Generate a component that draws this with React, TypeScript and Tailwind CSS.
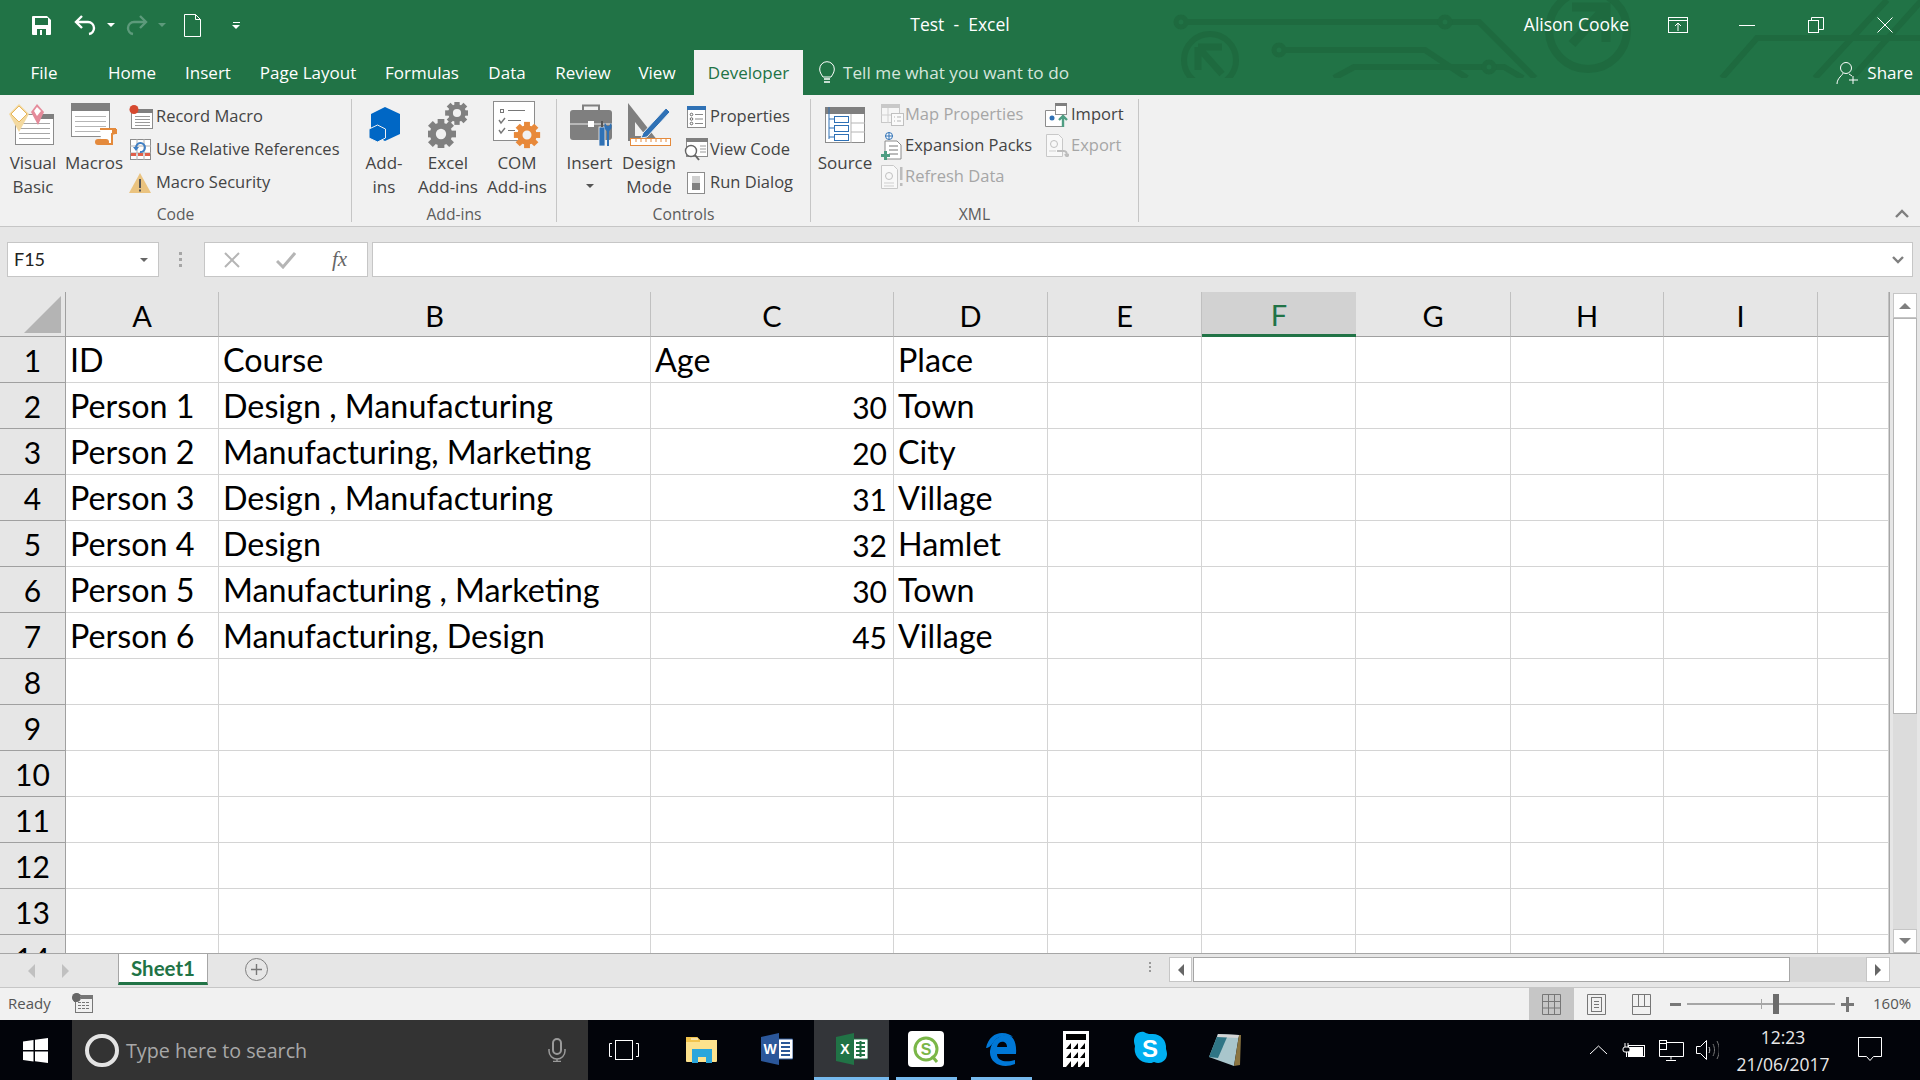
import type { ReactNode } from "react";

const GREY = "#7f7f7f";

function Svg({ w, h, children, className }: { w: number; h: number; children: ReactNode; className?: string }) {
  return (
    <svg width={w} height={h} viewBox={`0 0 ${w} ${h}`} fill="none" className={`block shrink-0 ${className ?? ""}`}>
      {children}
    </svg>
  );
}

function Gear({ cx, cy, r, fill }: { cx: number; cy: number; r: number; fill: string }) {
  const teeth = [0, 45, 90, 135, 180, 225, 270, 315];
  return (
    <g>
      {teeth.map((a) => (
        <rect key={a} x={cx - r * 0.28} y={cy - r * 1.25} width={r * 0.56} height={r * 0.6} fill={fill} transform={`rotate(${a} ${cx} ${cy})`} />
      ))}
      <circle cx={cx} cy={cy} r={r * 0.68} stroke={fill} strokeWidth={r * 0.5} fill="#f1f1f1" />
    </g>
  );
}

function Lines({ x1, x2, ys, color = "#a6a6a6" }: { x1: number; x2: number; ys: number[]; color?: string }) {
  return (
    <>
      {ys.map((y) => (
        <path key={y} d={`M${x1} ${y + 0.5}H${x2}`} stroke={color} />
      ))}
    </>
  );
}

const icons = {
  visualBasic: (
    <Svg w={46} h={43}>
      <rect x="6.5" y="11.5" width="38" height="30" fill="#fff" stroke="#8c8c8c" />
      <rect x="30" y="11" width="15" height="5" fill="#7f7f7f" />
      <Lines x1={10} x2={41} ys={[20, 25, 30, 35]} />
      <path d="M10 1 20 11 10 29 0 11Z" fill="#f3d9a0" />
      <path d="M10 3 18 11 10 19 2 11Z" fill="#fff" stroke="#e6b65c" />
      <path d="M28 1 35 9 29 22 22 9Z" fill="#e58b9b" />
      <path d="M28 4 32 8 28 13 25 8Z" fill="#fff" />
    </Svg>
  ),
  macros: (
    <Svg w={47} h={43}>
      <rect x="0.5" y="0.5" width="38" height="33" fill="#fff" stroke="#8c8c8c" />
      <rect x="0" y="0" width="39" height="8" fill="#7f7f7f" />
      <Lines x1={4} x2={35} ys={[13, 18, 23, 28]} color="#b5b5b5" />
      <path d="M29 26h15v4l-3 1v10H30V36" fill="#fff" stroke="#e48a3c" strokeWidth="2" />
      <rect x="24" y="36" width="14" height="6" rx="3" fill="#e48a3c" />
      <path d="M41 26h5v5h-5Z" fill="#e48a3c" />
    </Svg>
  ),
  record: (
    <Svg w={24} h={24}>
      <rect x="2.5" y="4.5" width="21" height="19" fill="#fff" stroke="#8c8c8c" />
      <rect x="8" y="4" width="16" height="4" fill="#7f7f7f" />
      <Lines x1={6} x2={21} ys={[11, 14, 17, 20]} color="#9a9a9a" />
      <circle cx="5" cy="4.5" r="4.5" fill="#d6492f" />
    </Svg>
  ),
  relative: (
    <Svg w={21} h={21}>
      <rect x="0.5" y="0.5" width="20" height="20" fill="#fff" stroke="#8c8c8c" />
      <path d="M7 0v21M14 0v21M0 7h21M0 14h21" stroke="#b0b0b0" />
      <rect x="1" y="14" width="5" height="3" fill="#e0604a" />
      <rect x="8" y="14" width="5" height="3" fill="#e0604a" />
      <rect x="15" y="14" width="5" height="3" fill="#e0604a" />
      <path d="M6 9a4.5 4.5 0 1 1 4 4" stroke="#3f7fc4" strokeWidth="2" />
      <path d="M3 8h6l-3 4Z" fill="#3f7fc4" />
    </Svg>
  ),
  warning: (
    <Svg w={24} h={22}>
      <path d="M12 1 23 21H1Z" fill="#eac37f" />
      <path d="M11 7h2v9h-2ZM11 17.5h2v2h-2Z" fill="#555" />
    </Svg>
  ),
  addins: (
    <Svg w={33} h={36}>
      <path d="M17 0 32 7v20L17 34 3 27V7Z" fill="#0067c5" />
      <path d="M9.500 18 17.500 22V31L9.500 35 1 31V22Z" fill="#0067c5" stroke="#f1f1f1" strokeWidth="1" />
    </Svg>
  ),
  excelAddins: (
    <Svg w={40} h={46}>
      <Gear cx={29} cy={11} r={9.5} fill="#808080" />
      <Gear cx={13} cy={32} r={12} fill="#808080" />
    </Svg>
  ),
  comAddins: (
    <Svg w={48} h={48}>
      <rect x="0.5" y="0.5" width="41" height="39" fill="#fff" stroke="#8c8c8c" />
      <rect x="7.5" y="8.5" width="3" height="3" stroke="#777" />
      <path d="M15 9.5H32M15 19.5H28M15 29.5H22" stroke="#777" />
      <path d="M6 19l2 3 4-5M6 29l2 3 4-5" stroke="#777" strokeWidth="1.4" />
      <Gear cx={34} cy={34} r={10.5} fill="#e8893a" />
    </Svg>
  ),
  insert: (
    <Svg w={46} h={43} className="ml-[6px]">
      <rect x="0" y="7" width="42" height="30" rx="3" fill="#7f7f7f" />
      <path d="M13 7V2.5h16V7" stroke="#7f7f7f" strokeWidth="2" />
      <path d="M0 21h42" stroke="#f1f1f1" />
      <rect x="18" y="18" width="6" height="6" fill="#fff" />
      <rect x="29" y="24" width="6" height="19" fill="#2f71b5" stroke="#f1f1f1" strokeWidth="0.8" />
      <path d="M31 18h2v6h-2Z" fill="#555" />
      <path d="M37 43V28c-3-2-3-6-2-8l2 3h2l2-3c1 3 1 6-2 8v15Z" fill="#2f71b5" />
    </Svg>
  ),
  design: (
    <Svg w={46} h={43}>
      <path d="M2 0 32 38H2Z" fill="#7f7f7f" />
      <path d="M9 19 20 33H9Z" fill="#f1f1f1" />
      <path d="M17 30 40 5l4 4-23 25-6 1Z" fill="#2f71b5" stroke="#f1f1f1" />
      <rect x="4.5" y="35.5" width="40" height="7" fill="#fff" stroke="#e48a3c" />
      <path d="M10 36v3M15 36v3M20 36v3M25 36v3M30 36v3M35 36v3M40 36v3" stroke="#e48a3c" />
    </Svg>
  ),
  properties: (
    <Svg w={19} h={22}>
      <rect x="0.5" y="0.5" width="18" height="21" fill="#fff" stroke="#8c8c8c" />
      <rect x="0" y="0" width="19" height="4" fill="#2f71b5" />
      <circle cx="4.5" cy="8.5" r="1.3" stroke="#666" />
      <circle cx="4.5" cy="13" r="1.3" stroke="#666" />
      <circle cx="4.5" cy="17.5" r="1.3" stroke="#666" />
      <path d="M8 8.5h8M8 13h8M8 17.5h8" stroke="#888" />
    </Svg>
  ),
  viewCode: (
    <Svg w={24} h={23}>
      <rect x="2.5" y="0.5" width="21" height="18" fill="#fff" stroke="#8c8c8c" />
      <rect x="2" y="0" width="22" height="4" fill="#7f7f7f" />
      <path d="M16 8h6M16 11h6M16 14h6" stroke="#999" />
      <circle cx="7" cy="13" r="5.5" fill="#fff" stroke="#666" strokeWidth="1.4" />
      <path d="M11 17l4 5" stroke="#666" strokeWidth="2" />
    </Svg>
  ),
  runDialog: (
    <Svg w={19} h={22}>
      <rect x="0.5" y="0.5" width="17" height="21" fill="#fff" stroke="#8c8c8c" />
      <rect x="5" y="4" width="8" height="14" fill="#d0d0d0" />
      <rect x="5" y="11" width="8" height="7" fill="#808080" />
    </Svg>
  ),
  source: (
    <Svg w={40} h={36}>
      <rect x="0.5" y="0.5" width="39" height="35" fill="#fff" stroke="#8c8c8c" />
      <rect x="0" y="0" width="40" height="7" fill="#7f7f7f" />
      <path d="M26 16h14M26 25h14M26 7v29" stroke="#b5b5b5" />
      <path d="M4 0v32M4 12h5M4 21h5M4 30h5" stroke="#2f71b5" />
      <rect x="9.5" y="9.5" width="14" height="6" fill="#fff" stroke="#2f71b5" />
      <rect x="9.5" y="18.5" width="14" height="6" fill="#fff" stroke="#2f71b5" />
      <rect x="9.5" y="27.5" width="14" height="6" fill="#fff" stroke="#2f71b5" />
    </Svg>
  ),
  mapProperties: (
    <Svg w={23} h={22}>
      <rect x="0.5" y="0.5" width="18" height="18" fill="#f6f6f6" stroke="#c8c8c8" />
      <rect x="0" y="0" width="19" height="4" fill="#c8c8c8" />
      <path d="M7 4v15M0 11h19" stroke="#d0d0d0" />
      <rect x="10.5" y="9.5" width="12" height="12" fill="#fafafa" stroke="#c0c0c0" />
      <path d="M13 13h1M16 13h4M13 17h1M16 17h4" stroke="#b5b5b5" />
    </Svg>
  ),
  expansion: (
    <Svg w={23} h={28}>
      <circle cx="8" cy="4" r="3.5" fill="#fff" stroke="#2f71b5" />
      <path d="M4.5 4h7M8 .5v7" stroke="#2f71b5" />
      <path d="M4 9h12l4 4v14H4Z" fill="#fff" stroke="#8c8c8c" />
      <path d="M8 14h9M8 18h9M8 22h9" stroke="#777" />
      <path d="M3 19h3v3h3v3H6v3H3v-3H0v-3h3Z" fill="#4f9e83" />
    </Svg>
  ),
  refresh: (
    <Svg w={22} h={24}>
      <path d="M.5.5h12l4 4v19H.5Z" fill="#f8f8f8" stroke="#c8c8c8" />
      <circle cx="8" cy="11" r="3.5" stroke="#c0c0c0" />
      <path d="M3 18h10M3 21h10" stroke="#cfcfcf" />
      <path d="M19 2h2.5v13H19ZM19 18h2.5v3H19Z" fill="#bdbdbd" />
    </Svg>
  ),
  importXml: (
    <Svg w={25} h={24}>
      <path d="M.5 7.5h13l4 4v12H.5Z" fill="#fff" stroke="#8c8c8c" />
      <rect x="10.5" y="0.5" width="11" height="11" fill="#fff" stroke="#8c8c8c" />
      <rect x="10" y="0" width="12" height="3" fill="#7f7f7f" />
      <circle cx="7" cy="15" r="2.5" fill="#2f71b5" />
      <path d="M18 24v-10M14 17l4-4 4 4" stroke="#4f9e83" strokeWidth="2.4" />
    </Svg>
  ),
  exportXml: (
    <Svg w={23} h={23}>
      <path d="M.5.5h12l4 4v18H.5Z" fill="#f8f8f8" stroke="#c8c8c8" />
      <circle cx="8" cy="10" r="3.5" stroke="#c0c0c0" />
      <path d="M3 17h7" stroke="#cfcfcf" />
      <path d="M11 17h7c3 0 3 3 3 5M19 20l2 3 2-3" stroke="#bdbdbd" strokeWidth="2" />
    </Svg>
  ),
};

function Large({ w, icon, lines, caret }: { w: string; icon: ReactNode; lines: string[]; caret?: boolean }) {
  return (
    <div className={`${w} flex flex-col items-center text-[17px]`}>
      <div className="-mt-[1px] flex h-[53px] items-center justify-center">{icon}</div>
      {lines.map((line) => (
        <div key={line} className="h-[24px] whitespace-nowrap leading-[24px]">
          {line}
        </div>
      ))}
      {caret && <div className="mt-[9px] h-0 w-0 border-x-[4px] border-t-[4px] border-x-transparent border-t-[#555]" />}
    </div>
  );
}

function Small({ box, h, icon, label, disabled }: { box: string; h: string; icon: ReactNode; label: string; disabled?: boolean }) {
  return (
    <div className={`flex items-center whitespace-nowrap ${h} ${disabled ? "text-[#a6a6a6]" : ""}`}>
      <div className={`${box} flex items-center justify-center`}>{icon}</div>
      <span>{label}</span>
    </div>
  );
}

function Group({ w, label, children }: { w: string; label: string; children: ReactNode }) {
  return (
    <div className={`${w} flex flex-col pt-[4px]`}>
      <div className="flex h-[106px]">{children}</div>
      <div className="flex h-[20px] items-center justify-center text-[15.7px] text-[#5c5c5c]">{label}</div>
    </div>
  );
}

function Separator() {
  return <div className="mt-[4px] h-[123px] w-px bg-[#c6c6c6]" />;
}

function Circuit() {
  return (
    <svg className="absolute left-0 top-0" width="1920" height="78" viewBox="0 0 1920 78" fill="none" stroke="#1e6a3f" strokeWidth="6">
      <circle cx="1181" cy="22" r="5" strokeWidth="5" />
      <path d="M1186 22H1441M1450 22H1479L1535 78" />
      <circle cx="1445" cy="22" r="5" strokeWidth="5" />
      <circle cx="1279" cy="50" r="5" strokeWidth="5" />
      <path d="M1284 50H1425L1467 78" />
      <path d="M1334 78 1354 67H1484M1494 67H1504L1523 78" />
      <circle cx="1489" cy="67" r="5" strokeWidth="5" />
      <ellipse cx="1210" cy="60" rx="26" ry="26" strokeWidth="6" />
      <path d="M1198 47H1222M1198 47V70M1198 47 1222 74" strokeWidth="7" />
      <circle cx="1588" cy="30" r="39" strokeWidth="8" />
      <path d="M1572 7H1606V42M1606 7 1572 44" strokeWidth="9" />
      <path d="M1722 78 1757 38H1920M1815 78 1887 0M1852 78 1922 0" strokeWidth="6" />
    </svg>
  );
}

function TitleBar() {
  return (
    <div className="relative h-[50px] text-[15px] text-white">
      <Circuit />
      <div className="relative grid h-full grid-cols-[1fr_auto_1fr] items-center">
        <div className="flex items-center pl-[32px]">
          <Svg w={19} h={19}>
            <path d="M0 1a1 1 0 0 1 1-1h14l4 4v14a1 1 0 0 1-1 1H1a1 1 0 0 1-1-1Z" fill="#fff" />
            <rect x="3" y="2" width="13" height="7" fill="#217346" />
            <rect x="5" y="13" width="9" height="6" fill="#217346" />
            <rect x="8" y="14" width="2" height="5" fill="#fff" />
          </Svg>
          <Svg w={22} h={23} className="ml-[23px]">
            <path d="M8 2 2 8l6 6" stroke="#fff" strokeWidth="2.4" />
            <path d="M3 8h11a6 6 0 0 1 6 6 6 6 0 0 1-5 6" stroke="#fff" strokeWidth="2.4" />
          </Svg>
          <div className="ml-[11px] h-0 w-0 border-x-[4px] border-t-[4px] border-x-transparent border-t-white" />
          <Svg w={22} h={23} className="ml-[11px]">
            <path d="M14 2l6 6-6 6" stroke="#5d9a7b" strokeWidth="2.4" />
            <path d="M19 8H8a6 6 0 0 0-6 6 6 6 0 0 0 5 6" stroke="#5d9a7b" strokeWidth="2.4" />
          </Svg>
          <div className="ml-[10px] h-0 w-0 border-x-[4px] border-t-[4px] border-x-transparent border-t-[#5d9a7b]" />
          <Svg w={17} h={23} className="ml-[18px]">
            <path d="M.5.5h11l5 5v17H.5Z" stroke="#fff" />
            <path d="M11.5.5v5h5" stroke="#fff" />
          </Svg>
          <div className="ml-[31px] flex flex-col items-center gap-[2px]">
            <div className="h-px w-[7px] bg-white" />
            <div className="h-0 w-0 border-x-[4px] border-t-[4px] border-x-transparent border-t-white" />
          </div>
        </div>
        <div className="-mt-[2px] whitespace-pre text-[17.5px]">Test  -  Excel</div>
        <div className="flex items-center justify-end">
          <span className="-mt-[2px] text-[17.5px]">Alison Cooke</span>
          <Svg w={20} h={16} className="ml-[39px]">
            <rect x="0.5" y="0.5" width="19" height="15" stroke="#fff" />
            <path d="M0 3.5h20M10 14V6M7 9l3-3 3 3" stroke="#fff" />
          </Svg>
          <div className="ml-[51px] h-px w-[16px] bg-white" />
          <Svg w={16} h={16} className="ml-[53px]">
            <rect x="0.5" y="3.5" width="10" height="12" stroke="#fff" />
            <path d="M3.5 3V.5h12v12H11" stroke="#fff" />
          </Svg>
          <Svg w={16} h={16} className="ml-[53px] mr-[27px]">
            <path d="M.5.5l15 15M15.5.5l-15 15" stroke="#fff" />
          </Svg>
        </div>
      </div>
    </div>
  );
}

const tabs = [
  { label: "File", w: "w-[88px]" },
  { label: "Home", w: "w-[88px]" },
  { label: "Insert", w: "w-[64px]" },
  { label: "Page Layout", w: "w-[136px]" },
  { label: "Formulas", w: "w-[92px]" },
  { label: "Data", w: "w-[78px]" },
  { label: "Review", w: "w-[74px]" },
  { label: "View", w: "w-[74px]" },
];

function TabRow() {
  return (
    <div className="relative flex h-[45px] items-stretch text-[17px] text-white">
      {tabs.map((t) => (
        <div key={t.label} className={`${t.w} flex items-center justify-center`}>
          {t.label}
        </div>
      ))}
      <div className="flex w-[109px] items-center justify-center bg-[#f1f1f1] text-[#217346]">Developer</div>
      <div className="flex flex-1 items-center pl-[16px] text-[#d5e6dc]">
        <Svg w={16} h={23}>
          <path d="M4 16C2 13 .7 11 .7 8a7.3 7.3 0 0 1 14.6 0c0 3-1.3 5-3.3 8Z" stroke="#fff" />
          <path d="M5 18h6M5 21h6" stroke="#fff" strokeWidth="1.4" />
        </Svg>
        <span className="ml-[8px] mt-[1px] text-[17.2px]">Tell me what you want to do</span>
      </div>
      <div className="flex items-center pr-[7px]">
        <Svg w={23} h={24}>
          <circle cx="10" cy="7" r="5.5" stroke="#fff" />
          <path d="M7 12c0 2-6 5-6 11M13 13l3 2" stroke="#fff" />
          <path d="M17 15v8M13 19h9" stroke="#fff" />
        </Svg>
        <span className="ml-[8px] mt-[1px]">Share</span>
      </div>
    </div>
  );
}

function Ribbon() {
  return (
    <div className="relative flex h-[132px] border-b border-[#c6c6c6] bg-[#f1f1f1] text-[16.5px] text-[#444]">
      <Group w="w-[351px]" label="Code">
        <Large w="w-[66px]" icon={<div className="-ml-[2px]">{icons.visualBasic}</div>} lines={["Visual", "Basic"]} />
        <Large w="w-[56px]" icon={icons.macros} lines={["Macros"]} />
        <div className="ml-[3px] flex flex-col pt-[1px]">
          <Small box="w-[31px]" h="h-[33px]" icon={icons.record} label="Record Macro" />
          <Small box="w-[31px]" h="h-[33px]" icon={icons.relative} label="Use Relative References" />
          <Small box="w-[31px]" h="h-[33px]" icon={<div className="-ml-[2px]">{icons.warning}</div>} label="Macro Security" />
        </div>
      </Group>
      <Separator />
      <Group w="w-[204px]" label="Add-ins">
        <Large w="w-[64px]" icon={icons.addins} lines={["Add-", "ins"]} />
        <Large w="w-[64px]" icon={icons.excelAddins} lines={["Excel", "Add-ins"]} />
        <Large w="w-[74px]" icon={icons.comAddins} lines={["COM", "Add-ins"]} />
      </Group>
      <Separator />
      <Group w="w-[253px]" label="Controls">
        <Large w="w-[65px]" icon={icons.insert} lines={["Insert"]} caret />
        <Large w="w-[54px]" icon={icons.design} lines={["Design", "Mode"]} />
        <div className="flex flex-col pt-[1px]">
          <Small box="w-[34px] pl-[6px]" h="h-[33px]" icon={icons.properties} label="Properties" />
          <Small box="w-[34px] pl-[6px]" h="h-[33px]" icon={icons.viewCode} label="View Code" />
          <Small box="w-[34px] pl-[6px]" h="h-[33px]" icon={icons.runDialog} label="Run Dialog" />
        </div>
      </Group>
      <Separator />
      <Group w="w-[327px]" label="XML">
        <Large w="w-[68px]" icon={icons.source} lines={["Source"]} />
        <div className="flex w-[165px] flex-col">
          <Small box="w-[26px]" h="h-[31px]" icon={icons.mapProperties} label="Map Properties" disabled />
          <Small box="w-[26px]" h="h-[31px]" icon={icons.expansion} label="Expansion Packs" />
          <Small box="w-[26px]" h="h-[31px]" icon={icons.refresh} label="Refresh Data" disabled />
        </div>
        <div className="flex flex-col">
          <Small box="w-[27px]" h="h-[31px]" icon={icons.importXml} label="Import" />
          <Small box="w-[27px]" h="h-[31px]" icon={icons.exportXml} label="Export" disabled />
        </div>
      </Group>
      <Separator />
      <Svg w={16} h={10} className="absolute right-[10px] top-[113px]">
        <path d="M2 9l6-6 6 6" stroke={GREY} strokeWidth="2.4" />
      </Svg>
    </div>
  );
}

function FormulaBar() {
  return (
    <div className="flex h-[65px] items-center bg-[#e6e6e6] pl-[7px] pr-[7px]">
      <div className="flex h-[35px] w-[152px] items-center justify-between border border-[#c6c6c6] bg-white pl-[6px] pr-[10px] font-['Lato',sans-serif] text-[18px] text-[#222]">
        F15
        <div className="h-0 w-0 border-x-[4px] border-t-[4px] border-x-transparent border-t-[#666]" />
      </div>
      <div className="ml-[20px] flex flex-col gap-[3px]">
        <div className="h-[3px] w-[3px] bg-[#a6a6a6]" />
        <div className="h-[3px] w-[3px] bg-[#a6a6a6]" />
        <div className="h-[3px] w-[3px] bg-[#a6a6a6]" />
      </div>
      <div className="ml-[22px] flex h-[35px] w-[164px] items-center border border-[#c6c6c6] bg-white">
        <Svg w={18} h={18} className="ml-[18px]">
          <path d="M2 2l14 14M16 2 2 16" stroke="#b5b5b5" strokeWidth="2" />
        </Svg>
        <Svg w={20} h={18} className="ml-[35px]">
          <path d="M1 10l6 6L19 2" stroke="#b5b5b5" strokeWidth="3" />
        </Svg>
        <span className="ml-[36px] font-['Liberation_Serif',serif] text-[21px] italic text-[#666]">fx</span>
      </div>
      <div className="ml-[4px] flex h-[35px] flex-1 items-center justify-end border border-[#c6c6c6] bg-white pr-[8px]">
        <Svg w={12} h={10}>
          <path d="M1 2l5 5 5-5" stroke={GREY} strokeWidth="2.4" />
        </Svg>
      </div>
    </div>
  );
}

const columns = ["A", "B", "C", "D", "E", "F", "G", "H", "I", ""];
const rows: [string, string, string, string][] = [
  ["ID", "Course", "Age", "Place"],
  ["Person 1", "Design , Manufacturing", "30", "Town"],
  ["Person 2", "Manufacturing, Marketing", "20", "City"],
  ["Person 3", "Design , Manufacturing", "31", "Village"],
  ["Person 4", "Design", "32", "Hamlet"],
  ["Person 5", "Manufacturing , Marketing", "30", "Town"],
  ["Person 6", "Manufacturing, Design", "45", "Village"],
  ["", "", "", ""],
  ["", "", "", ""],
  ["", "", "", ""],
  ["", "", "", ""],
  ["", "", "", ""],
  ["", "", "", ""],
  ["", "", "", ""],
];

function Sheet() {
  return (
    <div className="flex h-[661px] bg-[#e6e6e6]">
      <div className="grid h-full w-[1889px] grid-cols-[66px_153px_432px_243px_154px_154px_154px_155px_153px_154px_71px] grid-rows-[45px] auto-rows-[46px] overflow-hidden font-['Lato',sans-serif] text-[32.3px] leading-none text-black">
        <div className="relative border-b border-r border-[#a0a0a0] bg-[#e6e6e6]">
          <div className="absolute left-[24px] top-[4px] h-0 w-0 border-b-[37px] border-l-[37px] border-b-[#b4b4b4] border-l-transparent" />
        </div>
        {columns.map((c) =>
          c === "F" ? (
            <div key={c} className="flex items-center justify-center border-b-[3px] border-[#217346] bg-[#d2d2d2] pt-[2px] text-[29px] text-[#217346]">
              {c}
            </div>
          ) : (
            <div key={c || "end"} className="flex items-center justify-center border-b border-r border-b-[#a0a0a0] border-r-[#c0c0c0] bg-[#e6e6e6] pt-[2px] text-[29px]">
              {c}
            </div>
          ),
        )}
        {rows.map((r, i) => (
          <div key={i} className="contents">
            <div className="flex items-center justify-center border-b border-r border-[#a0a0a0] bg-[#e6e6e6] pt-[1px] text-[30px]">{i + 1}</div>
            {columns.map((c, j) => {
              const text = j < 4 ? r[j] : "";
              const numeric = j === 2 && i > 0;
              return (
                <div
                  key={c || "end"}
                  className={`flex items-center overflow-visible whitespace-nowrap border-b border-r border-[#d4d4d4] bg-white pt-[2px] ${
                    numeric ? "justify-end pr-[6px] text-[30px]" : "pl-[4px]"
                  }`}
                >
                  {text}
                </div>
              );
            })}
          </div>
        ))}
      </div>
      <div className="flex w-[31px] flex-col border-l border-[#a6a6a6] pl-[3px] pr-[3px] pt-[1px]">
        <div className="flex h-[25px] items-center justify-center border border-[#c6c6c6] bg-white">
          <div className="h-0 w-0 border-x-[6px] border-b-[6px] border-x-transparent border-b-[#7f7f7f]" />
        </div>
        <div className="flex flex-1 flex-col bg-[#dcdcdc]">
          <div className="h-[396px] border border-[#b5b5b5] bg-white" />
        </div>
        <div className="flex h-[24px] items-center justify-center border border-[#c6c6c6] bg-white">
          <div className="h-0 w-0 border-x-[6px] border-t-[6px] border-x-transparent border-t-[#7f7f7f]" />
        </div>
      </div>
    </div>
  );
}

function SheetTabs() {
  return (
    <div className="flex h-[35px] items-start border-y border-y-[#a6a6a6] border-b-[#c6c6c6] bg-[#e6e6e6]">
      <div className="mt-[10px] ml-[28px] h-0 w-0 border-y-[7px] border-r-[7px] border-y-transparent border-r-[#c0c0c0]" />
      <div className="mt-[10px] ml-[27px] h-0 w-0 border-y-[7px] border-l-[7px] border-y-transparent border-l-[#c0c0c0]" />
      <div className="ml-[49px] flex h-[31px] w-[90px] items-center justify-center border-x border-b-[3px] border-x-[#a6a6a6] border-b-[#217346] bg-white font-['Lato',sans-serif] text-[20.5px] font-bold text-[#217346]">
        Sheet1
      </div>
      <div className="ml-[37px] mt-[4px] flex h-[23px] w-[23px] items-center justify-center rounded-full border border-[#808080] text-[#777]">
        <Svg w={11} h={11}>
          <path d="M5.5 0v11M0 5.5h11" stroke="#777" strokeWidth="1.4" />
        </Svg>
      </div>
      <div className="ml-[881px] mt-[8px] flex flex-col gap-[2px]">
        <div className="h-[2px] w-[2px] bg-[#999]" />
        <div className="h-[2px] w-[2px] bg-[#999]" />
        <div className="h-[2px] w-[2px] bg-[#999]" />
      </div>
      <div className="ml-[18px] mt-[3px] flex h-[25px] w-[23px] items-center justify-center border border-[#c6c6c6] bg-white">
        <div className="h-0 w-0 border-y-[6px] border-r-[6px] border-y-transparent border-r-[#666]" />
      </div>
      <div className="ml-[1px] mt-[3px] h-[25px] w-[597px] border border-[#a6a6a6] bg-white" />
      <div className="mt-[3px] h-[25px] w-[76px] bg-[#d8d8d8]" />
      <div className="mt-[3px] flex h-[25px] w-[24px] items-center justify-center border border-[#c6c6c6] bg-white">
        <div className="h-0 w-0 border-y-[6px] border-l-[6px] border-y-transparent border-l-[#666]" />
      </div>
    </div>
  );
}

function StatusBar() {
  return (
    <div className="flex h-[32px] items-center bg-[#f1f1f1] pl-[8px] text-[15px] text-[#555]">
      <span className="-mt-[2px]">Ready</span>
      <Svg w={21} h={20} className="-mt-[2px] ml-[21px]">
        <circle cx="5" cy="5" r="4.5" fill="#666" />
        <rect x="3.5" y="2.5" width="17" height="17" fill="#f1f1f1" stroke="#777" />
        <rect x="9" y="2" width="12" height="4" fill="#777" />
        <circle cx="4.5" cy="4.5" r="4.5" fill="#666" />
        <path d="M6 9.5h12M6 12.5h12M6 15.5h12" stroke="#777" strokeDasharray="3 1" />
      </Svg>
      <div className="flex-1" />
      <div className="flex h-full w-[45px] items-center justify-center bg-[#c6c6c6]">
        <Svg w={19} h={21}>
          <path d="M.5.5h18v20H.5ZM6.5.5v20M12.5.5v20M.5 7.5h18M.5 14h18" stroke="#777" />
        </Svg>
      </div>
      <Svg w={19} h={21} className="ml-[13px]">
        <path d="M.5.5h18v20H.5Z" stroke="#777" />
        <rect x="4.5" y="3.5" width="10" height="14" stroke="#777" />
        <path d="M7 7.5h5M7 10.5h5M7 13.5h5" stroke="#777" />
      </Svg>
      <Svg w={19} h={21} className="ml-[26px]">
        <path d="M.5.5h18v20H.5ZM.5 12.5h18M6.5.5v12M12.5.5v12" stroke="#777" />
      </Svg>
      <div className="ml-[19px] h-[3px] w-[11px] bg-[#777]" />
      <div className="relative ml-[6px] h-[2px] w-[148px] bg-[#a6a6a6]">
        <div className="absolute left-[74px] top-[-4px] h-[10px] w-px bg-[#a6a6a6]" />
        <div className="absolute left-[86px] top-[-9px] h-[20px] w-[6px] bg-[#6c6c6c]" />
      </div>
      <Svg w={13} h={15} className="ml-[6px]">
        <path d="M6.5 0v15M0 7.5h13" stroke="#777" strokeWidth="3" />
      </Svg>
      <span className="-mt-[2px] ml-[19px] w-[47px]">160%</span>
    </div>
  );
}

function TaskItem({ children, active, running }: { children: ReactNode; active?: boolean; running?: boolean }) {
  return (
    <div className={`relative flex w-[75px] items-center justify-center ${active ? "bg-[#333539]" : ""}`}>
      <div className="pb-[2px]">{children}</div>
      {active && <div className="absolute inset-x-0 bottom-0 h-[3px] bg-[#76b9ed]" />}
      {running && <div className="absolute inset-x-[7px] bottom-0 h-[3px] bg-[#76b9ed]" />}
    </div>
  );
}

function Taskbar() {
  return (
    <div className="flex h-[60px] items-stretch bg-[#02040a] font-['Open_Sans',sans-serif] text-white">
      <div className="flex w-[72px] items-center justify-center pr-[1px]">
        <Svg w={25} h={25}>
          <path d="M0 3.5 10.5 2v10H0ZM12 1.8 25 0v12H12ZM0 13.5h10.5v10L0 22ZM12 13.5h13V25l-13-1.8Z" fill="#fff" />
        </Svg>
      </div>
      <div className="flex w-[516px] items-center bg-[#333] pl-[13px] text-[19.7px] text-[#a8a8a8]">
        <div className="h-[33px] w-[34px] rounded-full border-[4px] border-[#e4e4e4]" />
        <span className="ml-[7px] mt-[1px]">Type here to search</span>
        <div className="flex-1" />
        <Svg w={18} h={24} className="mr-[22px]">
          <rect x="5" y="1" width="8" height="15" rx="4" stroke="#9a9a9a" strokeWidth="2" />
          <path d="M1 11v2a8 8 0 0 0 16 0v-2M9 21v2M5 23.5h8" stroke="#9a9a9a" strokeWidth="1.5" />
        </Svg>
      </div>
      <div className="flex w-[76px] items-center justify-center pr-[5px]">
        <Svg w={30} h={20}>
          <rect x="6.5" y="0.5" width="17" height="19" stroke="#fff" />
          <path d="M3 3.5H.5v13H3M27 3.5h2.5v13H27" stroke="#fff" />
        </Svg>
      </div>
      <TaskItem>
        <Svg w={32} h={27}>
          <path d="M0 1h11l3 3h17v21a1 1 0 0 1-1 1H1a1 1 0 0 1-1-1Z" fill="#fde28d" />
          <path d="M0 1h11l3 3v2H0Z" fill="#f2c44d" />
          <path d="M5 3h7" stroke="#fff" />
          <path d="M6 27V13h20v14h-6v-6h-8v6Z" fill="#2aa6dc" />
        </Svg>
      </TaskItem>
      <TaskItem>
        <Svg w={32} h={32}>
          <path d="M12 6h19a1 1 0 0 1 1 1v18a1 1 0 0 1-1 1H12Z" fill="#fff" stroke="#2b5797" />
          <path d="M20 10h9M20 14h9M20 18h9M20 22h9" stroke="#2b5797" strokeWidth="2" />
          <path d="M18 0v32L0 28V4Z" fill="#2b579a" />
          <text x="9" y="21" textAnchor="middle" fontFamily="Liberation Sans" fontWeight="700" fontSize="14" fill="#fff">W</text>
        </Svg>
      </TaskItem>
      <TaskItem active>
        <Svg w={32} h={32}>
          <path d="M12 6h19a1 1 0 0 1 1 1v18a1 1 0 0 1-1 1H12Z" fill="#fff" stroke="#217346" />
          <path d="M20 10h9M20 14h9M20 18h9M20 22h9M24.500 8v16" stroke="#217346" strokeWidth="2" />
          <path d="M18 0v32L0 28V4Z" fill="#217346" />
          <text x="9" y="21" textAnchor="middle" fontFamily="Liberation Sans" fontWeight="700" fontSize="14" fill="#fff">X</text>
        </Svg>
      </TaskItem>
      <TaskItem running>
        <div className="mr-[1px] flex h-[36px] w-[36px] items-center justify-center rounded-[4px] bg-white">
          <Svg w={30} h={30}>
            <circle cx="15" cy="15" r="11" stroke="#7ab648" strokeWidth="3" />
            <path d="M21 22l5 6" stroke="#7ab648" strokeWidth="3" />
            <text x="15" y="21" textAnchor="middle" fontFamily="Liberation Sans" fontWeight="700" fontSize="16" fill="#7ab648">S</text>
          </Svg>
        </div>
      </TaskItem>
      <TaskItem running>
        <Svg w={31} h={33}>
          <path d="M30 21H11c0 7 9 9 18 6v4C17 36 3 31 4 18 5 8 13 2 20 2c7 0 11 7 10 19Z" fill="#0078d7" />
          <path d="M11 14h10c0-7-9-7-10 0Z" fill="#02040a" />
          <path d="M0 15C2 5 9 0 16 0c5 0 9 2 11 4-8-3-16-1-20 6-2 3-5 5-7 5Z" fill="#0078d7" />
        </Svg>
      </TaskItem>
      <TaskItem>
        <div className="mr-[2px] flex h-[36px] w-[26px] flex-col items-center gap-[3px] bg-white pt-[3px]">
          <div className="h-[7px] w-[20px] bg-black" />
          {[0, 1, 2].map((i) => (
            <Svg key={i} w={20} h={6}>
              <path d="M0 6l5-6v6ZM7 6l5-6v6ZM14 6l5-6v6Z" fill="#000" />
            </Svg>
          ))}
        </div>
      </TaskItem>
      <TaskItem>
        <Svg w={34} h={36} className="mr-[3px]">
          <path d="M11 1C5 0 1 4 1 10c0 2 .5 3 1 5-2 8 4 17 14 17 2 0 3 0 5-1 7 3 13-2 13-8 0-2-.5-3-1-5C34 9 27 2 18 3c-2 0-3 0-7-2Z" fill="#00aff0" />
          <text x="17" y="26" textAnchor="middle" fontFamily="Liberation Sans" fontWeight="700" fontSize="24" fill="#fff">S</text>
        </Svg>
      </TaskItem>
      <TaskItem>
        <Svg w={33} h={34} className="mr-[4px]">
          <path d="M10 2 31 3 26 34 1 25Z" fill="#a9c6cc" />
          <path d="M10 2 20 3 10 26 1 25Z" fill="#2f7585" />
          <path d="M31 3 33 3 32 33 26 34Z" fill="#8a7440" />
          <path d="M10 2 31 3 30 6 9 5Z" fill="#d4d4d4" />
        </Svg>
      </TaskItem>
      <div className="flex-1" />
      <div className="flex items-center">
        <Svg w={19} h={10}>
          <path d="M1 9l8.500-8L18 9" stroke="#fff" />
        </Svg>
        <Svg w={24} h={15} className="ml-[14px]">
          <rect x="6.500" y="2.500" width="16" height="11" stroke="#fff" />
          <rect x="6" y="4" width="15" height="9" fill="#fff" />
          <rect x="1" y="4" width="7" height="5" rx="2" fill="#02040a" stroke="#fff" />
          <path d="M3 0v4M6 0v4M4.500 9v5" stroke="#fff" />
        </Svg>
        <Svg w={25} h={21} className="ml-[13px]">
          <path d="M.5 2.500h24v14H.5ZM12 16.500v3M7 20.500h10" stroke="#fff" />
          <rect x="0.500" y="0.500" width="7" height="9" fill="#02040a" stroke="#fff" />
          <path d="M1 3.500h6" stroke="#fff" />
        </Svg>
        <Svg w={23} h={20} className="ml-[12px]">
          <path d="M.5 6.500h4l6-6v19l-6-6h-4Z" stroke="#fff" />
          <path d="M13 7c1 2 1 4 0 6" stroke="#ccc" />
          <path d="M17 4c2 4 2 8 0 12M21 1c3 6 3 12 0 18" stroke="#777" />
        </Svg>
      </div>
      <div className="ml-[11px] flex w-[106px] flex-col items-center justify-center gap-[7px] whitespace-nowrap text-[17.5px] leading-[20px] text-[#e8e8e8]">
        <div>12:23</div>
        <div>21/06/2017</div>
      </div>
      <div className="ml-[22px] flex items-center pr-[38px] pb-[2px]">
        <Svg w={24} h={25}>
          <path d="M.5.5h23v19h-8l-3.500 4-3.500-4h-8Z" stroke="#fff" />
        </Svg>
      </div>
    </div>
  );
}

export default function App() {
  return (
    <div className="flex h-[1080px] w-[1920px] flex-col overflow-hidden bg-[#f1f1f1] font-['Open_Sans',sans-serif]">
      <div className="bg-[#217346]">
        <TitleBar />
        <TabRow />
      </div>
      <Ribbon />
      <FormulaBar />
      <Sheet />
      <SheetTabs />
      <StatusBar />
      <Taskbar />
    </div>
  );
}
